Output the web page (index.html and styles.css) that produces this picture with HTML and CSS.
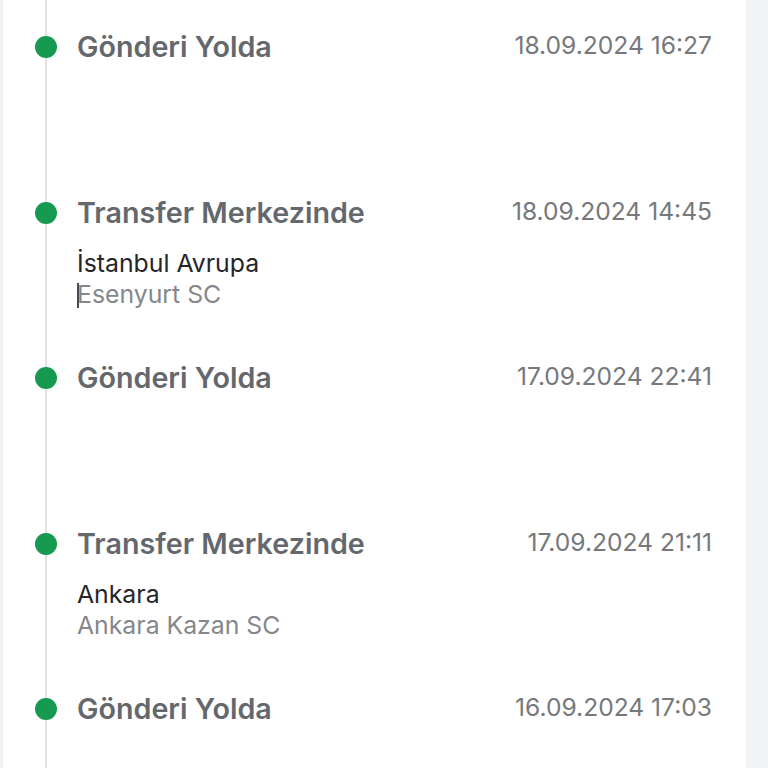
FILE: index.html
```html
<!DOCTYPE html>
<html lang="tr">
<head>
  <meta charset="UTF-8">
  <meta name="viewport" content="width=device-width, initial-scale=1.0">
  <title>Gönderi Hareketleri</title>
  <link rel="stylesheet" href="styles.css">
</head>
<body>
  <div class="panel">
    <ul class="timeline">
      <li class="step">
        <span class="dot"></span>
        <div class="info">
          <div class="title">Gönderi Yolda</div>
        </div>
        <div class="date">18.09.2024 16:27</div>
      </li>
      <li class="step">
        <span class="dot"></span>
        <div class="info">
          <div class="title">Transfer Merkezinde</div>
          <div class="city">İstanbul Avrupa</div>
          <div class="branch"><span class="caret"></span>Esenyurt SC</div>
        </div>
        <div class="date">18.09.2024 14:45</div>
      </li>
      <li class="step">
        <span class="dot"></span>
        <div class="info">
          <div class="title">Gönderi Yolda</div>
        </div>
        <div class="date">17.09.2024 22:41</div>
      </li>
      <li class="step">
        <span class="dot"></span>
        <div class="info">
          <div class="title">Transfer Merkezinde</div>
          <div class="city">Ankara</div>
          <div class="branch">Ankara Kazan SC</div>
        </div>
        <div class="date">17.09.2024 21:11</div>
      </li>
      <li class="step">
        <span class="dot"></span>
        <div class="info">
          <div class="title">Gönderi Yolda</div>
        </div>
        <div class="date">16.09.2024 17:03</div>
      </li>
    </ul>
  </div>
  <div class="side"></div>
</body>
</html>
```

FILE: styles.css
```css
html, body { height: 100%; }
body { margin: 0; display: flex; font-family: Inter, "Noto Sans", sans-serif; background: #fff; overflow: hidden; }
.panel { flex: 1; border-left: 3px solid #f1f1f3; padding-right: 34px; overflow: hidden; }
.side { width: 22px; background: #f3f4f6; }

.timeline { list-style: none; margin: 0 0 0 42px; padding: 30px 0 0; border-left: 2px solid #e3e3e6; min-height: 100%; box-sizing: border-box; }
.step { display: flex; align-items: flex-start; height: 165.5px; }
.dot { width: 22px; height: 22px; border-radius: 50%; background: #159a50; margin: 6px 0 0 -12px; flex-shrink: 0; }
.info { flex: 1; margin-left: 20px; }
.title { font-size: 28.7px; line-height: 34px; font-weight: 600; color: #64686d; }
.city { margin-top: 18px; font-size: 24.8px; line-height: 31px; color: #262629; }
.branch { font-size: 24.8px; line-height: 31px; color: #85878b; }
.caret { display: inline-block; width: 0; height: 25px; border-left: 2px solid #4a4a4a; vertical-align: -5px; margin-right: -2px; }
.date { font-size: 24.6px; line-height: 30px; color: #76787c; }
```
